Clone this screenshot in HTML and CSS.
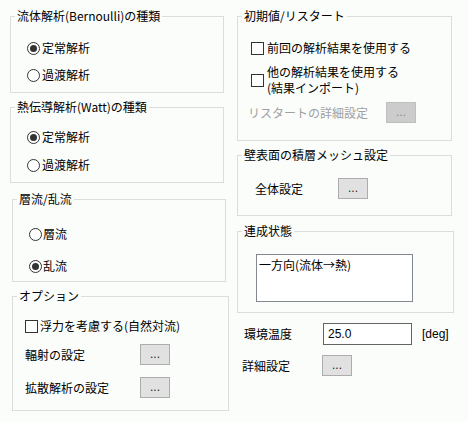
FILE: index.html
```html
<!DOCTYPE html>
<html lang="ja">
<head>
<meta charset="utf-8">
<link rel="stylesheet" href="styles.css">
</head>
<body>
<div class="page">
  <div class="col col-left">
    <fieldset class="grp g-l1">
      <legend>流体解析(Bernoulli)の種類</legend>
      <div class="inner">
        <div class="row"><span class="radio on"></span>定常解析</div>
        <div class="row"><span class="radio"></span>過渡解析</div>
      </div>
    </fieldset>
    <fieldset class="grp g-l2">
      <legend>熱伝導解析(Watt)の種類</legend>
      <div class="inner">
        <div class="row"><span class="radio on"></span>定常解析</div>
        <div class="row"><span class="radio"></span>過渡解析</div>
      </div>
    </fieldset>
    <fieldset class="grp g-l3">
      <legend>層流/乱流</legend>
      <div class="inner">
        <div class="row"><span class="radio"></span>層流</div>
        <div class="row"><span class="radio on"></span>乱流</div>
      </div>
    </fieldset>
    <fieldset class="grp g-l4">
      <legend>オプション</legend>
      <div class="inner">
        <div class="row"><span class="check"></span>浮力を考慮する(自然対流)</div>
        <div class="row btnrow"><span class="lbl">輻射の設定</span><span class="btn">...</span></div>
        <div class="row btnrow"><span class="lbl">拡散解析の設定</span><span class="btn">...</span></div>
      </div>
    </fieldset>
  </div>
  <div class="col col-right">
    <fieldset class="grp g-r1">
      <legend>初期値/リスタート</legend>
      <div class="inner">
        <div class="row"><span class="check"></span>前回の解析結果を使用する</div>
        <div class="row two"><span class="check"></span><span class="twoline"><span class="ln">他の解析結果を使用する</span><span class="ln">(結果インポート)</span></span></div>
        <div class="row btnrow disabled"><span class="lbl">リスタートの詳細設定</span><span class="btn">...</span></div>
      </div>
    </fieldset>
    <fieldset class="grp g-r2">
      <legend>壁表面の積層メッシュ設定</legend>
      <div class="inner">
        <div class="row btnrow"><span class="lbl">全体設定</span><span class="btn">...</span></div>
      </div>
    </fieldset>
    <fieldset class="grp g-r3">
      <legend>連成状態</legend>
      <div class="inner">
        <div class="listbox">一方向(流体→熱)</div>
      </div>
    </fieldset>
    <div class="row temp"><span class="lbl">環境温度</span><span class="input">25.0</span><span class="unit">[deg]</span></div>
    <div class="row detail"><span class="lbl">詳細設定</span><span class="btn">...</span></div>
  </div>
</div>
</body>
</html>
```
FILE: styles.css
```css
html, body {
  margin: 0;
  padding: 0;
  background: #fbfdfb;
}
body {
  width: 468px;
  height: 422px;
  overflow: hidden;
  font-family: "Noto Sans CJK JP", "Liberation Sans", sans-serif;
  font-size: 12px;
  line-height: 14px;
  color: #000;
}
.page {
  display: flex;
}
.col {
  display: flex;
  flex-direction: column;
}
.col-left {
  margin-left: 10px;
  width: 219px;
  padding-top: 9px;
}
.col-right {
  margin-left: 8px;
  padding-top: 9px;
}
.grp {
  box-sizing: border-box;
  margin: 0;
  padding: 0;
  border: 1px solid #dcdcdc;
  min-width: 0;
}
.grp legend {
  padding: 0 2px;
  margin-left: 4px;
  height: 14px;
  line-height: 14px;
}
.inner {
  display: flex;
  flex-direction: column;
}
.row {
  display: flex;
  align-items: center;
  height: 14px;
  white-space: nowrap;
}
.radio {
  width: 13px;
  height: 13px;
  box-sizing: border-box;
  border: 1px solid #333;
  border-radius: 50%;
  background: #fff;
  margin-right: 2px;
  display: flex;
  align-items: center;
  justify-content: center;
}
.radio.on::after {
  content: "";
  width: 7px;
  height: 7px;
  border-radius: 50%;
  background: #333;
}
.check {
  width: 13px;
  height: 13px;
  box-sizing: border-box;
  border: 1px solid #333;
  background: #fff;
  margin-right: 2px;
  flex: none;
}
.btn {
  width: 30px;
  height: 21px;
  box-sizing: border-box;
  border: 1px solid #adadad;
  background: #e1e1e1;
  display: flex;
  align-items: center;
  justify-content: center;
  font-family: "Liberation Sans", sans-serif;
  font-size: 12px;
  line-height: 12px;
  padding-bottom: 2px;
  color: #1a1a1a;
}
.btnrow {
  height: 21px;
}

/* left column */
.g-l1 { width: 214px; }
.g-l1 .inner { padding: 18px 0 10px 16px; gap: 13px; }
.g-l2 { width: 214px; margin-top: 7px; }
.g-l2 .inner { padding: 16px 0 10px 16px; gap: 14px; }
.g-l3 { width: 214px; margin-top: 9px; margin-left: 2px; }
.g-l3 .inner { padding: 21px 0 8px 16px; gap: 18px; }
.g-l3 .radio { margin-right: 1px; }
.g-l4 { width: 217px; margin-top: 7px; margin-left: 2px; }
.g-l4 .inner { padding: 16px 0 12px 12px; }
.g-l4 .row:nth-child(2) { margin-top: 11px; }
.g-l4 .row:nth-child(3) { margin-top: 12px; }
.g-l4 .lbl { width: 115px; }

/* right column */
.g-r1 { width: 215px; }
.g-r1 .inner { padding: 18px 0 17px 13px; }
.g-r1 .check { margin-right: 3px; }
.g-r1 .two { height: 32px; margin-top: 9px; }
.twoline { display: flex; flex-direction: column; }
.ln { height: 16px; line-height: 16px; }
.g-r1 .disabled { margin-top: 6px; margin-left: -3px; }
.g-r1 .lbl { width: 138px; }
.disabled { color: #a0a0a0; }
.disabled .btn {
  background: #cccccc;
  border-color: #bfbfbf;
  color: #8a8a8a;
}
.g-r2 { width: 215px; margin-top: 7px; }
.g-r2 .inner { padding: 16px 0 16px 17px; }
.g-r2 .lbl { width: 83px; }
.g-r3 { width: 217px; margin-top: 8px; }
.g-r3 .inner { padding: 16px 0 10px 18px; }
.listbox {
  width: 157px;
  height: 48px;
  box-sizing: border-box;
  border: 1px solid #828790;
  background: #fff;
  padding: 3px 0 0 2px;
  line-height: 14px;
}
.temp {
  height: 22px;
  margin-top: 10px;
  margin-left: 7px;
}
.temp .lbl { width: 79px; }
.input {
  width: 89px;
  height: 22px;
  box-sizing: border-box;
  border: 1px solid #646464;
  background: #fff;
  padding: 0 0 0 4px;
  display: flex;
  align-items: center;
  font-family: "Liberation Sans", sans-serif;
  font-size: 12px;
}
.unit {
  margin-left: 10px;
  font-family: "Liberation Sans", sans-serif;
  font-size: 12px;
}
.detail {
  height: 21px;
  margin-top: 10px;
  margin-left: 5px;
}
.detail .lbl { width: 80px; }
```
